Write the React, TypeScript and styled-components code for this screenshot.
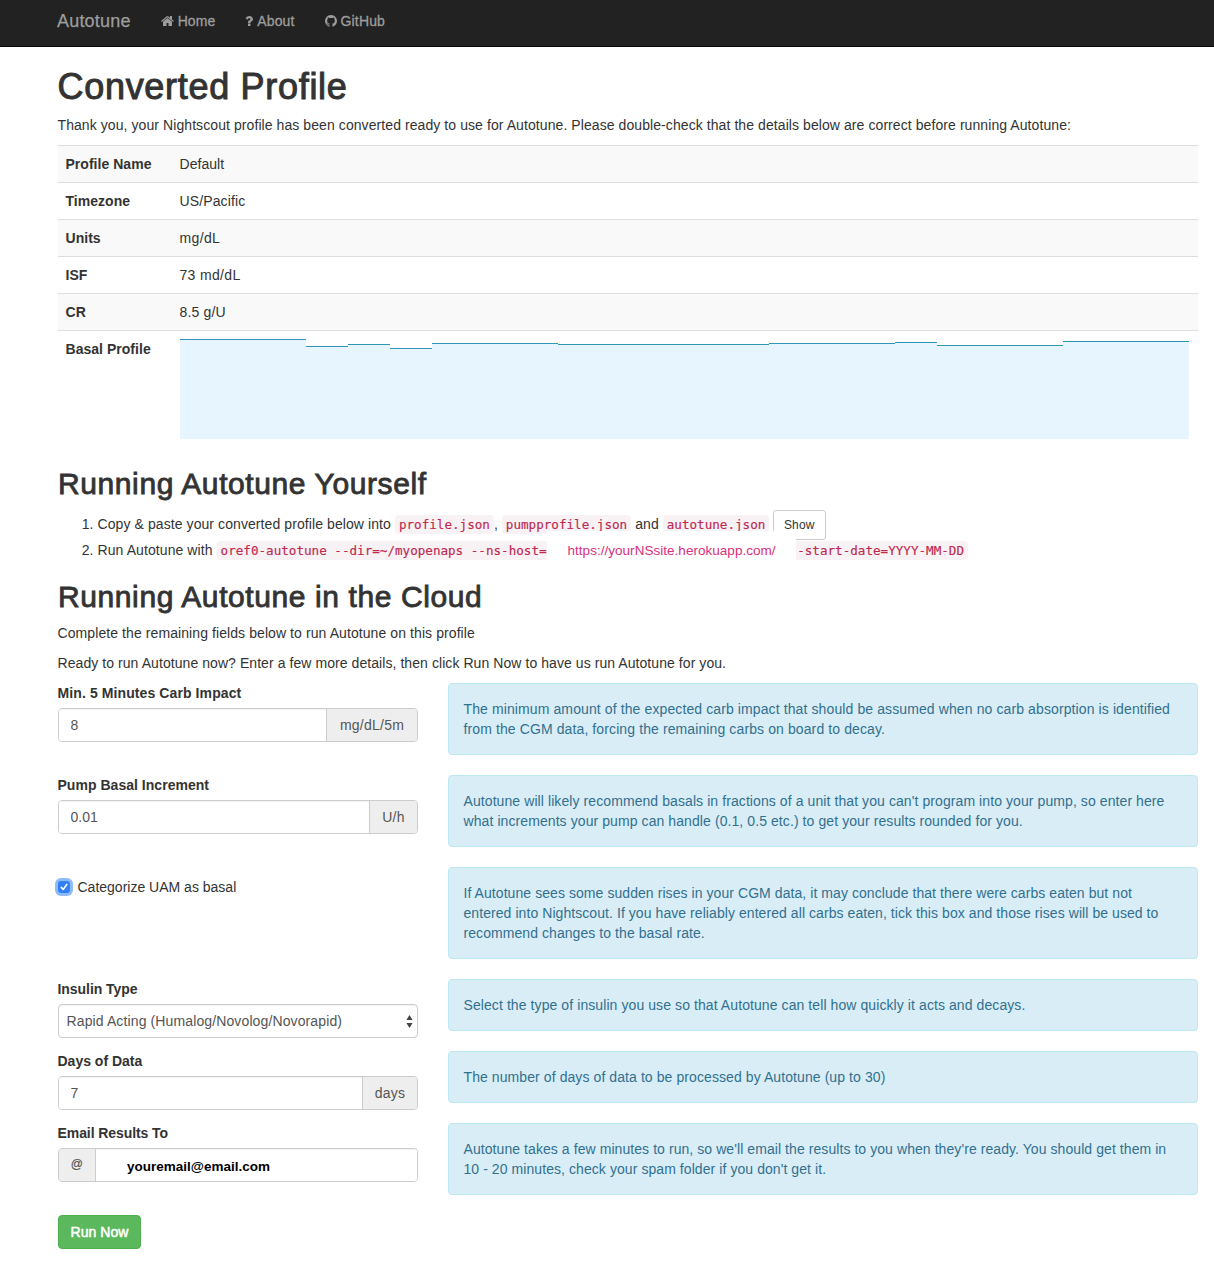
import React, { useState } from 'react';
import styled, { createGlobalStyle } from 'styled-components';

const sans = '"Helvetica Neue", Helvetica, "Liberation Sans", Arial, sans-serif';

const GlobalStyle = createGlobalStyle`
  *, *::before, *::after { box-sizing: border-box; }
  body {
    margin: 0;
    background: #fff;
    color: #333;
    font-family: ${sans};
    font-size: 14px;
    line-height: 20px;
    letter-spacing: 0.085px;
  }
`;

const Navbar = styled.nav`
  height: 47px;
  padding-left: 57px;
  display: flex;
  align-items: flex-start;
  background: #222;
  border-bottom: 1px solid #080808;
`;

const Brand = styled.a`
  padding: 11px 15px 15px 0;
  font-size: 18px;
  color: #9d9d9d;
  letter-spacing: 0.2px;
  -webkit-text-stroke: 0.25px #9d9d9d;
`;

const NavItem = styled.a<{ $tracking?: number }>`
  display: flex;
  gap: 4px;
  padding: 11px 15px 15px;
  color: #9d9d9d;
  letter-spacing: ${(p) => p.$tracking ?? 0.1}px;
  -webkit-text-stroke: 0.3px #9d9d9d;
`;

const NavIcon = styled.svg<{ $w: number }>`
  width: ${(p) => p.$w}px;
  height: 14px;
  margin-top: 4px;
  fill: #9d9d9d;
  stroke: none;
  overflow: visible;
`;

const Container = styled.main`
  width: 1170px;
  margin-left: 43px;
  padding: 20px 15px 17px;
`;

const Title = styled.h1`
  margin: 0 0 8px -0.5px;
  font-size: 36px;
  line-height: 40px;
  font-weight: 400;
  letter-spacing: 0.7px;
  -webkit-text-stroke: 1px #333;
`;

const Heading = styled.h2`
  margin: 20px 0 10px;
  font-size: 30px;
  line-height: 33px;
  font-weight: 400;
  letter-spacing: 0.6px;
  -webkit-text-stroke: 0.85px #333;
`;

const Paragraph = styled.p<{ $tracking?: number }>`
  margin: 0 0 10px -0.5px;
  letter-spacing: ${(p) => p.$tracking ?? 0.085}px;
`;

const ProfileTable = styled.table`
  width: 100%;
  margin-bottom: 20px;
  border-collapse: collapse;
  border-spacing: 0;
  tr:nth-child(odd) { background: #f9f9f9; }
  tr:last-child { background: #fff; }
`;

const LabelCell = styled.th`
  width: 114px;
  padding: 8px 0 8px 7.5px;
  border-top: 1px solid #ddd;
  text-align: left;
  vertical-align: top;
  letter-spacing: 0.03px;
`;

const ValueCell = styled.td<{ $tracking?: number }>`
  padding: 8px 9px 8px 7.5px;
  border-top: 1px solid #ddd;
  vertical-align: top;
  letter-spacing: ${(p) => p.$tracking ?? 0.085}px;
`;

const Chart = styled.svg`
  display: block;
  width: 1009px;
  height: 100px;
  margin-left: 0.5px;
`;

const Steps = styled.ol`
  position: relative;
  margin: 0 0 19px;
  padding-left: 39.5px;
  line-height: 20px;
`;

const Step = styled.li<{ $h: number; $line: number }>`
  height: ${(p) => p.$h}px;
  line-height: ${(p) => p.$line}px;
  white-space: nowrap;
`;

const Code = styled.code`
  padding: 2px 4px;
  border-radius: 4px;
  background: #f9f2f4;
  color: #c02850;
  font-family: Menlo, "DejaVu Sans Mono", monospace;
  font-size: 12.6px;
  letter-spacing: 0;
  -webkit-text-stroke: 0.15px #c02850;
`;

const Hidden = styled.span`
  display: inline-block;
  width: 243px;
`;

const SiteMask = styled.span`
  position: absolute;
  left: 489px;
  top: 21px;
  width: 249px;
  height: 31px;
  padding: 10px 0 0 20.5px;
  background: #fff;
  color: #dc2f7d;
  font-size: 13.5px;
  line-height: 20px;
  letter-spacing: 0.03px;
`;

const ShowButton = styled.button`
  height: 30px;
  width: 53px;
  margin-left: -0.5px;
  padding: 0;
  border: 1px solid #ccc;
  border-radius: 3px;
  background: #fff;
  color: #333;
  font: 12px/18px ${sans};
  letter-spacing: 0.2px;
  vertical-align: middle;
`;

const FormRow = styled.div`
  display: grid;
  grid-template-columns: 360px 750px;
  column-gap: 30px;
  align-items: start;
  margin-bottom: 20px;
`;

const Field = styled.div`
  margin-bottom: -20px;
`;

const Label = styled.label<{ $tracking?: number }>`
  display: block;
  margin: 0 0 5px -0.5px;
  font-weight: 700;
  letter-spacing: ${(p) => p.$tracking ?? 0}px;
`;

const Group = styled.div`
  display: flex;
  height: 34px;
  overflow: hidden;
  border: 1px solid #ccc;
  border-radius: 4px;
`;

const Input = styled.input`
  flex: 1;
  min-width: 0;
  padding: 0 11.5px;
  border: 0;
  outline: 0;
  background: #fff;
  box-shadow: inset 0 1px 1px rgba(0, 0, 0, 0.06);
  color: #555;
  font: 14px/20px ${sans};
`;

const EmailInput = styled(Input)`
  padding: 4px 31px 0;
  color: #000;
  font: bold 13.5px/20px ${sans};
`;

const Addon = styled.span<{ $side?: 'left' | 'right'; $w: number }>`
  flex: none;
  width: ${(p) => p.$w}px;
  line-height: 32px;
  text-align: center;
  color: #555;
  background: #eee;
  letter-spacing: 0.25px;
  border-${(p) => p.$side ?? 'left'}: 1px solid #ccc;
`;

const AtSign = styled(Addon)`
  font-size: 12px;
  line-height: 31px;
  -webkit-text-stroke: 0.2px #555;
`;

const SelectBox = styled.div`
  position: relative;
`;

const Select = styled.select`
  appearance: none;
  display: block;
  width: 100%;
  height: 34px;
  padding: 0 24px 0 7.5px;
  border: 1px solid #ccc;
  border-radius: 4px;
  background: #fff;
  box-shadow: inset 0 1px 1px rgba(0, 0, 0, 0.06);
  color: #555;
  font: 14px/20px ${sans};
  letter-spacing: 0.12px;
`;

const Arrows = styled.svg`
  position: absolute;
  right: 5px;
  top: 11px;
  width: 7px;
  height: 13px;
  fill: #444;
  pointer-events: none;
`;

const CheckLabel = styled.label`
  display: flex;
  align-items: center;
  height: 20px;
  margin-top: 10px;
  letter-spacing: 0;
`;

const Checkbox = styled.span<{ $on: boolean }>`
  width: 12px;
  height: 12px;
  margin-right: 7.5px;
  border-radius: 3px;
  background: ${(p) => (p.$on ? '#3181f6' : '#fff')};
  box-shadow: 0 0 0 3px #8fbcf6;
  svg { display: block; }
`;

const NativeCheck = styled.input`
  position: absolute;
  opacity: 0;
  pointer-events: none;
`;

const Info = styled.div<{ $tracking?: number }>`
  padding: 15px 14.5px;
  border: 1px solid #bce8f1;
  border-radius: 4px;
  background: #d9edf7;
  color: #31708f;
  white-space: nowrap;
  letter-spacing: ${(p) => p.$tracking ?? 0.085}px;
`;

const RunButton = styled.button`
  display: block;
  width: 83px;
  height: 34px;
  padding: 0;
  border: 1px solid #4cae4c;
  border-radius: 4px;
  background: #5cb85c;
  color: #fff;
  font: 14px/20px ${sans};
  letter-spacing: 0.06px;
  -webkit-text-stroke: 0.5px #fff;
`;

const HOME =
  'M1472 992v480q0 26-19 45t-45 19h-384v-384h-256v384h-384q-26 0-45-19t-19-45v-480q0-1 .5-3t.5-3l575-474 575 474q1 2 1 6zm223-69l-62 74q-8 9-21 11h-3q-13 0-21-7l-692-577-692 577q-12 8-24 7-13-2-21-11l-62-74q-8-10-7-23.5t11-21.5l719-599q32-26 76-26t76 26l244 204v-195q0-14 9-23t23-9h192q14 0 23 9t9 23v408l219 182q10 8 11 21.5t-7 23.5z';
const QUESTION =
  'M1088 1256v240q0 16-12 28t-28 12h-240q-16 0-28-12t-12-28v-240q0-16 12-28t28-12h240q16 0 28 12t12 28zm316-600q0 54-15.5 101t-35 76.5-55 59.5-57.5 43.5-61 35.5q-41 23-68.5 65t-27.5 67q0 17-12 32.5t-28 15.5h-240q-15 0-25.5-18.5t-10.5-37.5v-45q0-83 65-156.5t143-108.5q59-27 84-56t25-76q0-42-46.5-74t-107.5-32q-65 0-108 29-35 25-107 115-13 16-31 16-12 0-25-8l-164-125q-13-10-15.5-25t5.5-28q160-266 464-266 80 0 161 31t146 83 106 127.5 41 158.5z';
const GITHUB =
  'M768 128q209 0 385.5 103t279.5 279.5 103 385.5q0 251-146.5 451.5t-378.5 277.5q-27 5-40-7t-13-30q0-3 .5-76.5t.5-134.5q0-97-52-142 57-6 102.5-18t94-39 81-66.5 53-105 20.5-150.5q0-119-79-206 37-91-8-204-28-9-81 11t-92 44l-38 24q-93-26-192-26t-192 26q-16-11-42.5-27t-83.5-38.5-85-13.5q-45 113-8 204-79 87-79 206 0 85 20.5 150t52.5 105 80.5 67 94 39 102.5 18q-39 36-49 103-21 10-45 15t-57 5-65.5-21.5-55.5-62.5q-19-32-48.5-52t-49.5-24l-20-3q-21 0-29 4.5t-5 11.5 9 14 13 12l7 5q22 10 43.5 38t31.5 51l10 23q13 38 44 61.5t67 30 69.5 7 55.5-3.5l23-4q0 38 .5 88.5t.5 54.5q0 18-13 30t-40 7q-232-77-378.5-277.5t-146.5-451.5q0-209 103-385.5t279.5-279.5 385.5-103z';

const profile: [string, string, number][] = [
  ['Profile Name', 'Default', 0.05],
  ['Timezone', 'US/Pacific', 0.12],
  ['Units', 'mg/dL', 0.35],
  ['ISF', '73 md/dL', 0.33],
  ['CR', '8.5 g/U', 0.15],
];

// [start x, end x, top of the step]
const basal = [
  [0, 126, 0], [126, 168, 7], [168, 210, 5], [210, 252, 9], [252, 378, 4],
  [378, 589, 5], [589, 715, 4], [715, 757, 3], [757, 883, 6], [883, 1009, 2],
];

function BasalChart() {
  return (
    <Chart viewBox="0 0 1009 100" shapeRendering="crispEdges">
      {basal.map(([x1, x2, y]) => (
        <g key={x1}>
          <rect x={x1} y={y} width={x2 - x1} height={100 - y} fill="#e6f5ff" />
          <rect x={x1} y={y} width={x2 - x1} height={1} fill="#2f96b4" />
        </g>
      ))}
    </Chart>
  );
}

export default function App() {
  const [uam, setUam] = useState(true);
  return (
    <>
      <GlobalStyle />
      <Navbar>
        <Brand>Autotune</Brand>
        <NavItem $tracking={0.05}>
          <NavIcon $w={13} viewBox="64 128 1664 1792"><path d={HOME} /></NavIcon>Home
        </NavItem>
        <NavItem $tracking={0.15}>
          <NavIcon $w={8} viewBox="388 128 1024 1792"><path d={QUESTION} /></NavIcon>About
        </NavItem>
        <NavItem $tracking={0.15}>
          <NavIcon $w={12} viewBox="0 128 1536 1792"><path d={GITHUB} /></NavIcon>GitHub
        </NavItem>
      </Navbar>
      <Container>
        <Title>Converted Profile</Title>
        <Paragraph $tracking={0.079}>
          Thank you, your Nightscout profile has been converted ready to use for Autotune. Please double-check that the
          details below are correct before running Autotune:
        </Paragraph>
        <ProfileTable>
          <tbody>
            {profile.map(([name, value, tracking]) => (
              <tr key={name}>
                <LabelCell>{name}</LabelCell>
                <ValueCell $tracking={tracking}>{value}</ValueCell>
              </tr>
            ))}
            <tr>
              <LabelCell>Basal Profile</LabelCell>
              <ValueCell><BasalChart /></ValueCell>
            </tr>
          </tbody>
        </ProfileTable>

        <Heading>Running Autotune Yourself</Heading>
        <Steps>
          <Step $h={30} $line={28}>
            Copy &amp; paste your converted profile below into <Code>profile.json</Code>{', '}
            <Code>pumpprofile.json</Code> and <Code>autotune.json</Code> <ShowButton>Show</ShowButton>
          </Step>
          <Step $h={20} $line={20}>
            Run Autotune with{' '}
            <Code>
              oref0-autotune --dir=~/myopenaps --ns-host=<Hidden />--start-date=YYYY-MM-DD
            </Code>
          </Step>
          <SiteMask>https://yourNSsite.herokuapp.com/</SiteMask>
        </Steps>

        <Heading>Running Autotune in the Cloud</Heading>
        <Paragraph>Complete the remaining fields below to run Autotune on this profile</Paragraph>
        <Paragraph $tracking={0.068}>
          Ready to run Autotune now? Enter a few more details, then click Run Now to have us run Autotune for you.
        </Paragraph>

        <FormRow>
          <Field>
            <Label $tracking={0.1}>Min. 5 Minutes Carb Impact</Label>
            <Group><Input defaultValue="8" /><Addon $w={91}>mg/dL/5m</Addon></Group>
          </Field>
          <Info $tracking={0.108}>
            The minimum amount of the expected carb impact that should be assumed when no carb absorption is identified
            <br />from the CGM data, forcing the remaining carbs on board to decay.
          </Info>
        </FormRow>
        <FormRow>
          <Field>
            <Label $tracking={0.03}>Pump Basal Increment</Label>
            <Group><Input defaultValue="0.01" /><Addon $w={48}>U/h</Addon></Group>
          </Field>
          <Info>
            Autotune will likely recommend basals in fractions of a unit that you can't program into your pump, so enter here
            <br />what increments your pump can handle (0.1, 0.5 etc.) to get your results rounded for you.
          </Info>
        </FormRow>
        <FormRow>
          <CheckLabel>
            <NativeCheck type="checkbox" checked={uam} onChange={(e) => setUam(e.target.checked)} />
            <Checkbox $on={uam}>
              <svg width="12" height="12" viewBox="0 0 12 12" fill="none" stroke="#fff" strokeWidth="1.6" strokeLinecap="round" strokeLinejoin="round">
                <path d="M3.3 6.4 5.2 8.5 8.8 3.4" />
              </svg>
            </Checkbox>
            Categorize UAM as basal
          </CheckLabel>
          <Info $tracking={0.067}>
            If Autotune sees some sudden rises in your CGM data, it may conclude that there were carbs eaten but not
            <br />entered into Nightscout. If you have reliably entered all carbs eaten, tick this box and those rises will be used to
            <br />recommend changes to the basal rate.
          </Info>
        </FormRow>
        <FormRow>
          <Field>
            <Label $tracking={-0.05}>Insulin Type</Label>
            <SelectBox>
              <Select><option>Rapid Acting (Humalog/Novolog/Novorapid)</option></Select>
              <Arrows viewBox="0 0 7 13"><path d="M3.5 0 6.6 5H.4zM3.5 13 .4 8h6.2z" /></Arrows>
            </SelectBox>
          </Field>
          <Info>Select the type of insulin you use so that Autotune can tell how quickly it acts and decays.</Info>
        </FormRow>
        <FormRow>
          <Field>
            <Label>Days of Data</Label>
            <Group><Input defaultValue="7" /><Addon $w={55}>days</Addon></Group>
          </Field>
          <Info>The number of days of data to be processed by Autotune (up to 30)</Info>
        </FormRow>
        <FormRow>
          <Field>
            <Label $tracking={-0.08}>Email Results To</Label>
            <Group><AtSign $side="right" $w={37}>@</AtSign><EmailInput defaultValue="youremail@email.com" /></Group>
          </Field>
          <Info $tracking={0.072}>
            Autotune takes a few minutes to run, so we'll email the results to you when they're ready. You should get them in
            <br />10 - 20 minutes, check your spam folder if you don't get it.
          </Info>
        </FormRow>
        <RunButton>Run Now</RunButton>
      </Container>
    </>
  );
}
